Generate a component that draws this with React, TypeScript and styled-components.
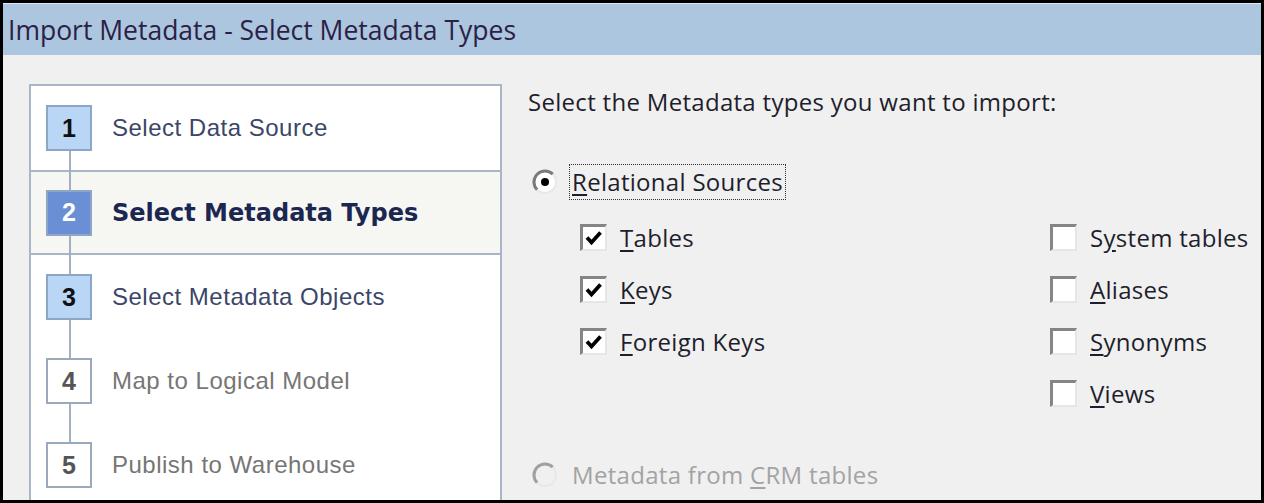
import React from 'react';
import styled, { createGlobalStyle } from 'styled-components';

const GlobalStyle = createGlobalStyle`
  html, body {
    margin: 0;
    padding: 0;
    background: #000;
  }
  body {
    font-family: 'Liberation Sans', Arial, sans-serif;
  }
`;

const Frame = styled.div`
  width: 1264px;
  height: 503px;
  box-sizing: border-box;
  border: 3px solid #000;
  display: flex;
  flex-direction: column;
  overflow: hidden;
  background: #f0f0f0;
`;

const TitleBar = styled.div`
  height: 52px;
  flex: none;
  background: #adc6e0;
  border-top: 1px solid #dbe6f1;
  box-sizing: border-box;
  padding-left: 5px;
  display: flex;
  align-items: center;
  font-family: 'Open Sans', 'Liberation Sans', sans-serif;
  font-size: 26.5px;
  color: #2b2145;
`;

const Body = styled.div`
  flex: 1;
  display: flex;
  min-height: 0;
`;

const StepPanel = styled.div`
  margin: 29px 0 0 26px;
  width: 473px;
  flex: none;
  background: #fff;
  border: 2px solid #a9b6c8;
  border-bottom: none;
  box-sizing: border-box;
  display: flex;
  flex-direction: column;
`;

const StepRow = styled.div<{ $height: number; $current?: boolean; $divider?: boolean }>`
  position: relative;
  height: ${(p) => p.$height}px;
  flex: none;
  display: flex;
  align-items: center;
  padding-left: 15px;
  background: ${(p) => (p.$current ? '#f6f6f3' : '#fff')};
  border-bottom: ${(p) => (p.$divider ? '2px solid #a9b6c8' : 'none')};
`;

const Connector = styled.span<{ $up: boolean; $down: boolean }>`
  position: absolute;
  left: 38px;
  width: 2px;
  background: #a3b0c2;
  top: ${(p) => (p.$up ? '-2px' : '50%')};
  bottom: ${(p) => (p.$down ? '-2px' : '50%')};
`;

type StepState = 'done' | 'current' | 'todo';

const StepBox = styled.span<{ $state: StepState }>`
  position: relative;
  z-index: 1;
  width: 46px;
  height: 46px;
  box-sizing: border-box;
  flex: none;
  display: flex;
  align-items: center;
  justify-content: center;
  font-weight: bold;
  font-size: 25px;
  border: 2px solid ${(p) => (p.$state === 'todo' ? '#9aa9bd' : '#8ea6c6')};
  background: ${(p) =>
    p.$state === 'current' ? '#6b8fd4' : p.$state === 'done' ? '#b9d6f6' : '#fff'};
  color: ${(p) => (p.$state === 'current' ? '#fff' : p.$state === 'done' ? '#111' : '#555')};
`;

const StepLabel = styled.span<{ $state: StepState }>`
  margin-left: 20px;
  font-size: 24px;
  font-family: ${(p) =>
    p.$state === 'current' ? "'DejaVu Sans', 'Liberation Sans', sans-serif" : 'inherit'};
  font-weight: ${(p) => (p.$state === 'current' ? 'bold' : 'normal')};
  color: ${(p) =>
    p.$state === 'current' ? '#1b2750' : p.$state === 'done' ? '#3b4668' : '#767676'};
  letter-spacing: ${(p) => (p.$state === 'current' ? '0' : '0.5px')};
`;

const Content = styled.div`
  flex: 1;
  padding: 32px 0 0 26px;
  display: flex;
  flex-direction: column;
  color: #1e1e2c;
  font-family: 'Open Sans', 'Liberation Sans', sans-serif;
  font-size: 24px;
  letter-spacing: 0.3px;
`;

const Heading = styled.div`
  height: 30px;
  line-height: 30px;
  margin-bottom: 47px;
`;

const RadioRow = styled.label<{ $disabled?: boolean }>`
  display: flex;
  align-items: center;
  height: 36px;
  padding-left: 4px;
  color: ${(p) => (p.$disabled ? '#a3a3a3' : 'inherit')};
`;

const RadioText = styled.span<{ $focused?: boolean }>`
  margin-left: 11px;
  padding: 3px 2px;
  border: 1px dotted ${(p) => (p.$focused ? '#333' : 'transparent')};
  line-height: 28px;
`;

const Options = styled.div`
  display: grid;
  grid-template-columns: 470px auto;
  grid-template-rows: repeat(4, 52px);
  padding-left: 52px;
  margin-top: 11px;
`;

const CheckRow = styled.label<{ $col: number; $row: number }>`
  grid-column: ${(p) => p.$col};
  grid-row: ${(p) => p.$row};
  display: flex;
  align-items: center;
`;

const Box = styled.span`
  width: 27px;
  height: 27px;
  box-sizing: border-box;
  flex: none;
  background: #fff;
  border-top: 3px solid #858585;
  border-left: 3px solid #858585;
  border-right: 2px solid #e6e6e6;
  border-bottom: 2px solid #e6e6e6;
  display: flex;
  align-items: center;
  justify-content: center;
  margin-right: 13px;
`;

const Spacer = styled.div`
  flex: 1;
`;

const CrmWrap = styled.div`
  padding-bottom: 7px;
`;

const Key = styled.u`
  text-underline-offset: 3px;
`;

const Check = () => (
  <svg width="18" height="16" viewBox="0 0 18 16">
    <path d="M2 7.5 L6.5 12.5 L15.5 2.5" fill="none" stroke="#000" strokeWidth="3.8" />
  </svg>
);

const Radio = ({ checked, disabled }: { checked?: boolean; disabled?: boolean }) => (
  <svg width="26" height="26" viewBox="0 0 26 26">
    <circle cx="13" cy="13" r="11" fill={disabled ? '#f0f0f0' : '#fff'} />
    <path d="M5.2 20.8 A11 11 0 0 1 20.8 5.2" fill="none" stroke={disabled ? '#a0a0a0' : '#7a7a7a'} strokeWidth="3" />
    <path d="M20.8 5.2 A11 11 0 0 1 5.2 20.8" fill="none" stroke="#e8e8e8" strokeWidth="2" />
    {checked && <circle cx="13" cy="13" r="4" fill="#000" />}
  </svg>
);

const steps: { n: number; label: string; state: StepState; h: number; divider?: boolean }[] = [
  { n: 1, label: 'Select Data Source', state: 'done', h: 84, divider: true },
  { n: 2, label: 'Select Metadata Types', state: 'current', h: 81, divider: true },
  { n: 3, label: 'Select Metadata Objects', state: 'done', h: 84 },
  { n: 4, label: 'Map to Logical Model', state: 'todo', h: 84 },
  { n: 5, label: 'Publish to Warehouse', state: 'todo', h: 84 },
];

const options: { pre: string; key: string; post: string; checked: boolean; col: number; row: number }[] = [
  { pre: '', key: 'T', post: 'ables', checked: true, col: 1, row: 1 },
  { pre: '', key: 'K', post: 'eys', checked: true, col: 1, row: 2 },
  { pre: '', key: 'F', post: 'oreign Keys', checked: true, col: 1, row: 3 },
  { pre: 'S', key: 'y', post: 'stem tables', checked: false, col: 2, row: 1 },
  { pre: '', key: 'A', post: 'liases', checked: false, col: 2, row: 2 },
  { pre: '', key: 'S', post: 'ynonyms', checked: false, col: 2, row: 3 },
  { pre: '', key: 'V', post: 'iews', checked: false, col: 2, row: 4 },
];

const App = () => {
  return (
    <>
      <GlobalStyle />
      <Frame>
        <TitleBar>Import Metadata - Select Metadata Types</TitleBar>
        <Body>
          <StepPanel>
            {steps.map((s, i) => (
              <StepRow key={s.n} $height={s.h} $current={s.state === 'current'} $divider={s.divider}>
                <Connector $up={i > 0} $down={i < steps.length - 1} />
                <StepBox $state={s.state}>{s.n}</StepBox>
                <StepLabel $state={s.state}>{s.label}</StepLabel>
              </StepRow>
            ))}
          </StepPanel>
          <Content>
            <Heading>Select the Metadata types you want to import:</Heading>
            <RadioRow>
              <Radio checked />
              <RadioText $focused>
                <Key>R</Key>elational Sources
              </RadioText>
            </RadioRow>
            <Options>
              {options.map((o) => (
                <CheckRow key={o.pre + o.key + o.post} $col={o.col} $row={o.row}>
                  <Box>{o.checked && <Check />}</Box>
                  <span>
                    {o.pre}
                    <Key>{o.key}</Key>
                    {o.post}
                  </span>
                </CheckRow>
              ))}
            </Options>
            <Spacer />
            <CrmWrap>
              <RadioRow $disabled>
                <Radio disabled />
                <RadioText>
                  Metadata from <Key>C</Key>RM tables
                </RadioText>
              </RadioRow>
            </CrmWrap>
          </Content>
        </Body>
      </Frame>
    </>
  );
};

export default App;
